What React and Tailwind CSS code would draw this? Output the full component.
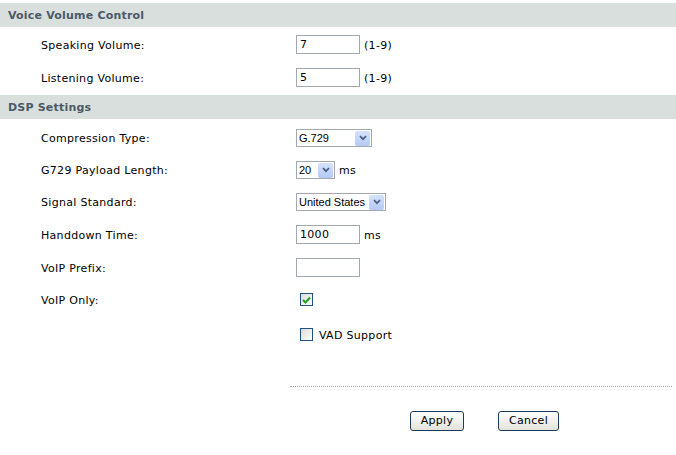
import React from "react";

const font = { fontFamily: '"DejaVu Sans", Verdana, sans-serif' };

const Header = ({ title, className = "" }) => (
  <div className={`h-6 bg-[#d9dfdd] flex items-center pl-2 pt-[3px] text-[11px] font-bold tracking-[0.2px] text-[#4b5968] ${className}`}>
    {title}
  </div>
);

const Row = ({ label, h = "h-[33px]", children }) => (
  <div className={`flex items-center pt-[2px] ${h}`}>
    <div className="w-[296px] pl-[41px] pt-[3px] text-[11px] tracking-[0.3px] text-black">{label}</div>
    <div className="flex items-center gap-1 text-[11px] tracking-[0.3px] text-black">{children}</div>
  </div>
);

const Note = ({ children }) => <span className="pt-[3px]">{children}</span>;

const TextBox = ({ value = "", w = "w-[64px]" }) => (
  <div className={`${w} h-[19px] border border-[#a0a8b0] bg-white flex items-center pl-[3px] pt-[2px] text-[11px]`}>
    {value}
  </div>
);

const Select = ({ value, w }) => (
  <div className={`${w} h-[18px] border border-[#a0a8b0] bg-white flex items-center justify-between pl-[2px] pr-px whitespace-nowrap font-['Liberation_Sans'] text-[11px] tracking-normal`}>
    <span className="pt-px">{value}</span>
    <span className="w-[15px] h-[15px] shrink-0 rounded-[2px] bg-gradient-to-b from-[#d6e2fb] to-[#b5c9f5] flex items-center justify-center">
      <svg width="8" height="6" viewBox="0 0 8 6">
        <path d="M1 1.2 L4 4.2 L7 1.2" fill="none" stroke="#4d6185" strokeWidth="1.8" />
      </svg>
    </span>
  </div>
);

const CheckBox = ({ checked }) => (
  <div className="w-[13px] h-[13px] border border-[#1c5180] bg-gradient-to-br from-[#dcdcd7] to-white flex items-center justify-center">
    {checked && (
      <svg width="9" height="8" viewBox="0 0 9 8">
        <path d="M1 4 L3.5 6.5 L8 1.5" fill="none" stroke="#21a121" strokeWidth="2" />
      </svg>
    )}
  </div>
);

const Button = ({ children, w }) => (
  <button className={`${w} h-[20px] pt-px rounded-[3px] border border-[#1c3a5a] bg-gradient-to-b from-white to-[#e3e3dc] text-[11px] tracking-[0.3px] text-black flex items-center justify-center`}>
    {children}
  </button>
);

export default function App() {
  return (
    <div className="w-[676px] h-[455px] bg-white pt-[3px]" style={font}>
      <Header title="Voice Volume Control" />
      <Row label="Speaking Volume:">
        <TextBox value="7" /> <Note>(1-9)</Note>
      </Row>
      <Row label="Listening Volume:">
        <TextBox value="5" /> <Note>(1-9)</Note>
      </Row>

      <Header title="DSP Settings" className="mt-[2px]" />
      <div className="h-[2px]" />
      <Row label="Compression Type:" h="h-[32px]">
        <Select value="G.729" w="w-[76px]" />
      </Row>
      <Row label="G729 Payload Length:" h="h-[32px]">
        <Select value="20" w="w-[39px]" />
        <Note>ms</Note>
      </Row>
      <Row label="Signal Standard:" h="h-[32px]">
        <Select value="United States" w="w-[90px]" />
      </Row>
      <Row label="Handdown Time:">
        <TextBox value="1000" /> <Note>ms</Note>
      </Row>
      <Row label="VoIP Prefix:">
        <TextBox />
      </Row>
      <Row label="VoIP Only:" h="h-[31px]">
        <div className="pl-1">
          <CheckBox checked />
        </div>
      </Row>
      <div className="flex items-center pt-[2px] h-[39px]">
        <div className="w-[300px]" />
        <CheckBox />
        <span className="ml-[6px] pt-[3px] text-[11px] tracking-[0.3px] text-black">VAD Support</span>
      </div>

      <div className="ml-[290px] mr-[4px] mt-[33px] border-t border-dotted border-[#a8a8a8]" />

      <div className="flex gap-[34px] pl-[410px] mt-[24px]">
        <Button w="w-[54px]">Apply</Button>
        <Button w="w-[61px]">Cancel</Button>
      </div>
    </div>
  );
}
